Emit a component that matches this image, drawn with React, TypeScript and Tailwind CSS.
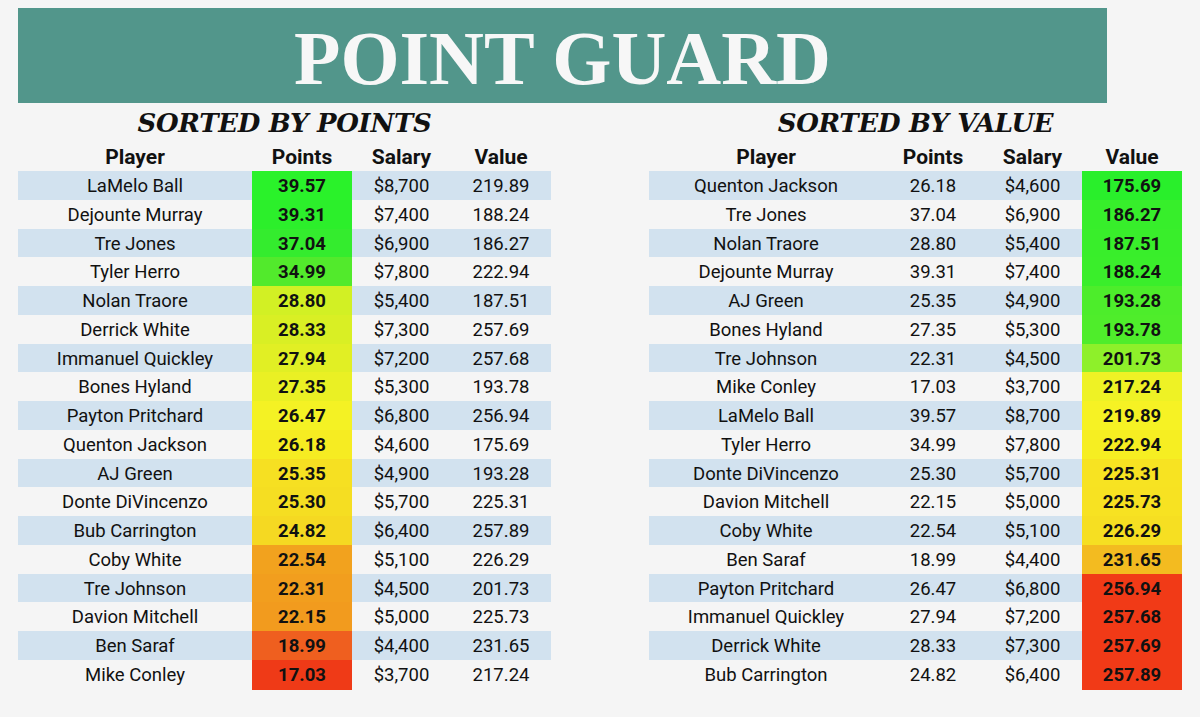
type Row = { name: string; pts: string; sal: string; val: string; heat: string };

const byPoints: Row[] = [
  { name: 'LaMelo Ball', pts: '39.57', sal: '$8,700', val: '219.89', heat: 'bg-[#2af22a]' },
  { name: 'Dejounte Murray', pts: '39.31', sal: '$7,400', val: '188.24', heat: 'bg-[#2cef2b]' },
  { name: 'Tre Jones', pts: '37.04', sal: '$6,900', val: '186.27', heat: 'bg-[#34ec2e]' },
  { name: 'Tyler Herro', pts: '34.99', sal: '$7,800', val: '222.94', heat: 'bg-[#52ea2c]' },
  { name: 'Nolan Traore', pts: '28.80', sal: '$5,400', val: '187.51', heat: 'bg-[#d2f024]' },
  { name: 'Derrick White', pts: '28.33', sal: '$7,300', val: '257.69', heat: 'bg-[#d9ef24]' },
  { name: 'Immanuel Quickley', pts: '27.94', sal: '$7,200', val: '257.68', heat: 'bg-[#e1ef24]' },
  { name: 'Bones Hyland', pts: '27.35', sal: '$5,300', val: '193.78', heat: 'bg-[#eaf024]' },
  { name: 'Payton Pritchard', pts: '26.47', sal: '$6,800', val: '256.94', heat: 'bg-[#f4f224]' },
  { name: 'Quenton Jackson', pts: '26.18', sal: '$4,600', val: '175.69', heat: 'bg-[#f6ec22]' },
  { name: 'AJ Green', pts: '25.35', sal: '$4,900', val: '193.28', heat: 'bg-[#f6e022]' },
  { name: 'Donte DiVincenzo', pts: '25.30', sal: '$5,700', val: '225.31', heat: 'bg-[#f5de22]' },
  { name: 'Bub Carrington', pts: '24.82', sal: '$6,400', val: '257.89', heat: 'bg-[#f5d922]' },
  { name: 'Coby White', pts: '22.54', sal: '$5,100', val: '226.29', heat: 'bg-[#f2a21e]' },
  { name: 'Tre Johnson', pts: '22.31', sal: '$4,500', val: '201.73', heat: 'bg-[#f29e1e]' },
  { name: 'Davion Mitchell', pts: '22.15', sal: '$5,000', val: '225.73', heat: 'bg-[#f29b1e]' },
  { name: 'Ben Saraf', pts: '18.99', sal: '$4,400', val: '231.65', heat: 'bg-[#ef5f1f]' },
  { name: 'Mike Conley', pts: '17.03', sal: '$3,700', val: '217.24', heat: 'bg-[#ef3a17]' },
];

const byValue: Row[] = [
  { name: 'Quenton Jackson', pts: '26.18', sal: '$4,600', val: '175.69', heat: 'bg-[#29ef2b]' },
  { name: 'Tre Jones', pts: '37.04', sal: '$6,900', val: '186.27', heat: 'bg-[#37ee2b]' },
  { name: 'Nolan Traore', pts: '28.80', sal: '$5,400', val: '187.51', heat: 'bg-[#39ee2b]' },
  { name: 'Dejounte Murray', pts: '39.31', sal: '$7,400', val: '188.24', heat: 'bg-[#3aee2b]' },
  { name: 'AJ Green', pts: '25.35', sal: '$4,900', val: '193.28', heat: 'bg-[#4ded2b]' },
  { name: 'Bones Hyland', pts: '27.35', sal: '$5,300', val: '193.78', heat: 'bg-[#4fed2b]' },
  { name: 'Tre Johnson', pts: '22.31', sal: '$4,500', val: '201.73', heat: 'bg-[#8ef02a]' },
  { name: 'Mike Conley', pts: '17.03', sal: '$3,700', val: '217.24', heat: 'bg-[#eef225]' },
  { name: 'LaMelo Ball', pts: '39.57', sal: '$8,700', val: '219.89', heat: 'bg-[#f6f224]' },
  { name: 'Tyler Herro', pts: '34.99', sal: '$7,800', val: '222.94', heat: 'bg-[#f6ee22]' },
  { name: 'Donte DiVincenzo', pts: '25.30', sal: '$5,700', val: '225.31', heat: 'bg-[#f7e322]' },
  { name: 'Davion Mitchell', pts: '22.15', sal: '$5,000', val: '225.73', heat: 'bg-[#f7e222]' },
  { name: 'Coby White', pts: '22.54', sal: '$5,100', val: '226.29', heat: 'bg-[#f6df22]' },
  { name: 'Ben Saraf', pts: '18.99', sal: '$4,400', val: '231.65', heat: 'bg-[#f3bb20]' },
  { name: 'Payton Pritchard', pts: '26.47', sal: '$6,800', val: '256.94', heat: 'bg-[#f13a17]' },
  { name: 'Immanuel Quickley', pts: '27.94', sal: '$7,200', val: '257.68', heat: 'bg-[#f13a17]' },
  { name: 'Derrick White', pts: '28.33', sal: '$7,300', val: '257.69', heat: 'bg-[#f13a17]' },
  { name: 'Bub Carrington', pts: '24.82', sal: '$6,400', val: '257.89', heat: 'bg-[#f13a17]' },
];

const cols = 'grid grid-cols-[234px_100px_99px_100px]';

function Table({ title, rows, heatCol }: { title: string; rows: Row[]; heatCol: 'pts' | 'val' }) {
  return (
    <div className="w-[533px]">
      <div className="h-[36px] text-center font-['DejaVu_Serif',serif] text-[26px] font-bold italic leading-[40px] tracking-[-0.3px] text-[#111]">
        {title}
      </div>
      <div className={`${cols} h-[32px] items-center pt-[3px] text-center text-[21px] font-bold text-[#111]`}>
        <span>Player</span>
        <span>Points</span>
        <span>Salary</span>
        <span>Value</span>
      </div>
      {rows.map((r, i) => (
        <div
          key={r.name}
          className={`${cols} h-[28.75px] items-stretch text-center text-[18.5px] text-[#111] ${
            i % 2 === 0 ? 'bg-[#d2e2ef]' : ''
          }`}
        >
          <span className="flex items-center justify-center pt-[2px]">{r.name}</span>
          <span
            className={`flex items-center justify-center pt-[2px] ${heatCol === 'pts' ? `${r.heat} font-bold` : ''}`}
          >
            {r.pts}
          </span>
          <span className="flex items-center justify-center pt-[2px]">{r.sal}</span>
          <span
            className={`flex items-center justify-center pt-[2px] ${heatCol === 'val' ? `${r.heat} font-bold` : ''}`}
          >
            {r.val}
          </span>
        </div>
      ))}
    </div>
  );
}

export default function App() {
  return (
    <div className="h-[717px] w-[1200px] overflow-hidden bg-[#f5f5f5] pl-[18px] pt-[8px] font-['Roboto',sans-serif]">
      <div className="flex h-[95px] w-[1089px] items-center justify-center bg-[#52968b]">
        <h1 className="mt-1 font-['Liberation_Serif',serif] text-[76px] font-bold leading-none text-[#f7f7f7]">
          POINT GUARD
        </h1>
      </div>
      <div className="flex gap-[98px]">
        <Table title="SORTED BY POINTS" rows={byPoints} heatCol="pts" />
        <Table title="SORTED BY VALUE" rows={byValue} heatCol="val" />
      </div>
    </div>
  );
}
